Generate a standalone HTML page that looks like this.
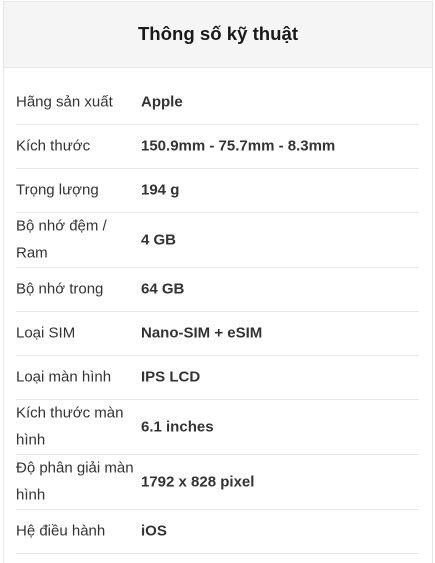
<!DOCTYPE html><html><head><meta charset="utf-8"><style>
html,body{margin:0;height:563px;overflow:hidden;}
body{background:#fff;font-family:"Liberation Sans",Arial,sans-serif;position:relative;}
.box{position:absolute;left:3px;top:1px;width:428px;height:570px;border:1px solid #e8e8e8;}
.hd{height:65px;background:#f5f5f5;border-bottom:1px solid #e8e8e8;text-align:center;line-height:64px;font-size:18.6px;font-weight:bold;color:#1a1a1a;}
.r{position:absolute;left:16px;width:403px;border-bottom:1px solid #e8e8e8;font-size:15px;color:#333;}
.l{position:absolute;left:0;width:122px;line-height:27.5px;top:50%;transform:translateY(-50%);}
.v{position:absolute;left:125px;top:50%;transform:translateY(-50%);font-weight:bold;color:#333;}
</style></head><body>
<div class="box"><div class="hd">Thông số kỹ thuật</div></div>
<div class="r" style="top:79px;height:45px"><div class="l">Hãng sản xuất</div><div class="v">Apple</div></div>
<div class="r" style="top:124px;height:44px"><div class="l">Kích thước</div><div class="v">150.9mm - 75.7mm - 8.3mm</div></div>
<div class="r" style="top:168px;height:44px"><div class="l">Trọng lượng</div><div class="v">194 g</div></div>
<div class="r" style="top:212px;height:55px"><div class="l">Bộ nhớ đệm /<br>Ram</div><div class="v">4 GB</div></div>
<div class="r" style="top:267px;height:44px"><div class="l">Bộ nhớ trong</div><div class="v">64 GB</div></div>
<div class="r" style="top:311px;height:44px"><div class="l">Loại SIM</div><div class="v">Nano-SIM + eSIM</div></div>
<div class="r" style="top:355px;height:44px"><div class="l">Loại màn hình</div><div class="v">IPS LCD</div></div>
<div class="r" style="top:399px;height:55px"><div class="l">Kích thước màn<br>hình</div><div class="v">6.1 inches</div></div>
<div class="r" style="top:454px;height:55px"><div class="l">Độ phân giải màn<br>hình</div><div class="v">1792 x 828 pixel</div></div>
<div class="r" style="top:509px;height:44px"><div class="l">Hệ điều hành</div><div class="v">iOS</div></div>
</body></html>
